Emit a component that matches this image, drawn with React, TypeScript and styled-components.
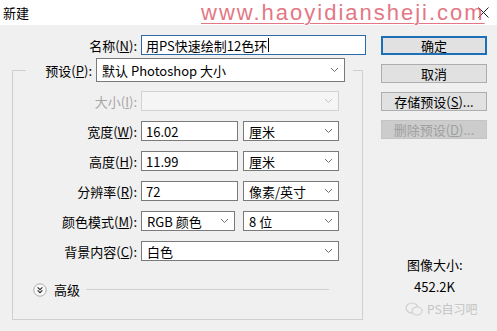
import styled, { createGlobalStyle } from "styled-components";

const GlobalStyle = createGlobalStyle`
  html, body {
    margin: 0;
    padding: 0;
    background: #f0f0f0;
  }
`;

const Window = styled.div`
  position: relative;
  width: 497px;
  height: 331px;
  overflow: hidden;
  background: #f0f0f0;
  font-family: "Noto Sans CJK SC", "Noto Sans", sans-serif;
  font-size: 13px;
  color: #000;
`;

const TitleBar = styled.div`
  height: 25px;
  background: #fff;
  display: flex;
  align-items: center;
  justify-content: space-between;
  padding: 0 8px 0 3px;
  box-sizing: border-box;
`;

const Watermark = styled.div`
  position: absolute;
  left: 201px;
  top: 1px;
  font-family: "Liberation Sans", Arial, sans-serif;
  font-size: 22px;
  line-height: 24px;
  letter-spacing: 2px;
  color: #e0606f;
  text-decoration: underline;
  text-decoration-thickness: 1px;
  text-underline-offset: 3px;
  opacity: 0.85;
`;

const Body = styled.div`
  display: flex;
`;

const LeftCol = styled.div`
  width: 370px;
`;

const RightCol = styled.div`
  width: 106px;
  margin-left: 11px;
  padding-top: 11px;
  display: flex;
  flex-direction: column;
  gap: 9px;
`;

const Row = styled.div`
  display: flex;
  align-items: center;
  gap: 4px;
  height: 20px;
`;

const NameRow = styled(Row)`
  margin-top: 10px;
`;

const Label = styled.span<{ $w: number; $disabled?: boolean }>`
  width: ${(p) => p.$w}px;
  text-align: right;
  white-space: nowrap;
  color: ${(p) => (p.$disabled ? "#a6a6a6" : "#000")};
`;

const Key = styled.span`
  text-decoration: underline;
  text-underline-offset: 1px;
`;

const TextBox = styled.div<{ $w: number; $focus?: boolean }>`
  width: ${(p) => p.$w}px;
  height: 20px;
  box-sizing: border-box;
  border: 1px solid ${(p) => (p.$focus ? "#2b6aa8" : "#7a7a7a")};
  background: #fff;
  display: flex;
  align-items: center;
  padding-left: 4px;
  white-space: nowrap;
`;

const Caret = styled.span`
  display: inline-block;
  width: 1px;
  height: 14px;
  background: #000;
  margin-left: 1px;
`;

const Select = styled.div<{ $w: number; $h?: number; $disabled?: boolean }>`
  width: ${(p) => p.$w}px;
  height: ${(p) => p.$h ?? 20}px;
  box-sizing: border-box;
  border: 1px solid ${(p) => (p.$disabled ? "#d2d2d2" : "#7a7a7a")};
  background: ${(p) => (p.$disabled ? "#f5f5f5" : "#fff")};
  display: flex;
  align-items: center;
  justify-content: space-between;
  padding: 0 5px 0 5px;
  white-space: nowrap;
`;

const Group = styled.fieldset`
  margin: 3px 0 0 12px;
  width: 351px;
  box-sizing: border-box;
  border: 1px solid #cfcfcf;
  padding: 9px 22px 23px 13px;
  min-width: 0;
`;

const Legend = styled.legend`
  padding: 0 8px 0 0;
  display: flex;
  align-items: center;
  gap: 4px;
`;

const Rows = styled.div`
  display: flex;
  flex-direction: column;
  gap: 10px;
`;

const Advanced = styled.div`
  display: flex;
  align-items: center;
  height: 13px;
  margin-top: 22px;
  padding: 0 11px 0 7px;
  gap: 7px;
`;

const Rule = styled.div`
  flex: 1;
  height: 1px;
  background: #d0d0d0;
  margin-left: -1px;
`;

const Button = styled.div<{ $primary?: boolean; $disabled?: boolean }>`
  height: 19px;
  box-sizing: border-box;
  display: flex;
  align-items: center;
  justify-content: center;
  background: ${(p) => (p.$disabled ? "#cccccc" : "#e1e1e1")};
  border: ${(p) =>
    p.$primary ? "2px solid #1d6fb8" : p.$disabled ? "1px solid #c4c4c4" : "1px solid #adadad"};
  color: ${(p) => (p.$disabled ? "#a0a0a0" : "#000")};
  white-space: nowrap;
`;

const Info = styled.div`
  margin-top: 108px;
  padding-left: 26px;
  display: flex;
  flex-direction: column;
  line-height: 18px;
`;

const InfoValue = styled.div`
  margin-top: 4px;
  padding-left: 7px;
`;

const Credit = styled.div`
  margin-top: 4px;
  margin-left: -2px;
  display: flex;
  align-items: center;
  gap: 4px;
  color: #c4c4c4;
  font-size: 12px;
`;

const Chevron = ({ light }: { light?: boolean }) => (
  <svg width="9" height="6" viewBox="0 0 9 6">
    <path d="M1 1 L4.5 4.5 L8 1" fill="none" stroke={light ? "#c8c8c8" : "#707070"} strokeWidth="1" />
  </svg>
);

const CloseIcon = () => (
  <svg width="11" height="11" viewBox="0 0 11 11">
    <path d="M0.5 0.5 L10.5 10.5 M10.5 0.5 L0.5 10.5" stroke="#222" strokeWidth="1" />
  </svg>
);

const ExpandIcon = () => (
  <svg width="14" height="14" viewBox="0 0 14 14">
    <circle cx="7" cy="7" r="6.2" fill="#f9f9f9" stroke="#a9a9a9" strokeWidth="1" />
    <path d="M4.6 4.4 L7 6.6 L9.4 4.4 M4.6 7.4 L7 9.6 L9.4 7.4" fill="none" stroke="#333" strokeWidth="1.2" />
  </svg>
);

const WeChat = () => (
  <svg width="18" height="14" viewBox="0 0 18 14">
    <ellipse cx="7" cy="6" rx="6" ry="5" fill="none" stroke="#cfcfcf" strokeWidth="1.2" />
    <ellipse cx="12" cy="9" rx="5" ry="4" fill="#f0f0f0" stroke="#cfcfcf" strokeWidth="1.2" />
  </svg>
);

const App = () => {
  return (
    <Window>
      <GlobalStyle />
      <TitleBar>
        <span>新建</span>
        <CloseIcon />
      </TitleBar>
      <Watermark>www.haoyidiansheji.com</Watermark>
      <Body>
        <LeftCol>
          <NameRow>
            <Label $w={137}>
              名称(<Key>N</Key>):
            </Label>
            <TextBox $w={225} $focus>
              用PS快速绘制12色环
              <Caret />
            </TextBox>
          </NameRow>
          <Group>
            <Legend>
              <Label $w={66}>
                预设(<Key>P</Key>):
              </Label>
              <Select $w={249} $h={24}>
                <span>默认 Photoshop 大小</span>
                <Chevron />
              </Select>
            </Legend>
            <Rows>
              <Row>
                <Label $w={111} $disabled>
                  大小(<Key>I</Key>):
                </Label>
                <Select $w={198} $disabled>
                  <span />
                  <Chevron light />
                </Select>
              </Row>
              <Row>
                <Label $w={111}>
                  宽度(<Key>W</Key>):
                </Label>
                <TextBox $w={97}>16.02</TextBox>
                <Select $w={96} style={{ marginLeft: 1 }}>
                  <span>厘米</span>
                  <Chevron />
                </Select>
              </Row>
              <Row>
                <Label $w={111}>
                  高度(<Key>H</Key>):
                </Label>
                <TextBox $w={97}>11.99</TextBox>
                <Select $w={96} style={{ marginLeft: 1 }}>
                  <span>厘米</span>
                  <Chevron />
                </Select>
              </Row>
              <Row>
                <Label $w={111}>
                  分辨率(<Key>R</Key>):
                </Label>
                <TextBox $w={97}>72</TextBox>
                <Select $w={96} style={{ marginLeft: 1 }}>
                  <span>像素/英寸</span>
                  <Chevron />
                </Select>
              </Row>
              <Row>
                <Label $w={111}>
                  颜色模式(<Key>M</Key>):
                </Label>
                <Select $w={94}>
                  <span>RGB 颜色</span>
                  <Chevron />
                </Select>
                <Select $w={96} style={{ marginLeft: 4 }}>
                  <span>8 位</span>
                  <Chevron />
                </Select>
              </Row>
              <Row>
                <Label $w={111}>
                  背景内容(<Key>C</Key>):
                </Label>
                <Select $w={198}>
                  <span>白色</span>
                  <Chevron />
                </Select>
              </Row>
            </Rows>
            <Advanced>
              <ExpandIcon />
              <span>高级</span>
              <Rule />
            </Advanced>
          </Group>
        </LeftCol>
        <RightCol>
          <Button $primary>确定</Button>
          <Button>取消</Button>
          <Button>
            存储预设(<Key>S</Key>)...
          </Button>
          <Button $disabled>
            删除预设(<Key>D</Key>)...
          </Button>
          <Info>
            <div>图像大小:</div>
            <InfoValue>452.2K</InfoValue>
            <Credit>
              <WeChat />
              <span>PS自习吧</span>
            </Credit>
          </Info>
        </RightCol>
      </Body>
    </Window>
  );
};

export default App;
